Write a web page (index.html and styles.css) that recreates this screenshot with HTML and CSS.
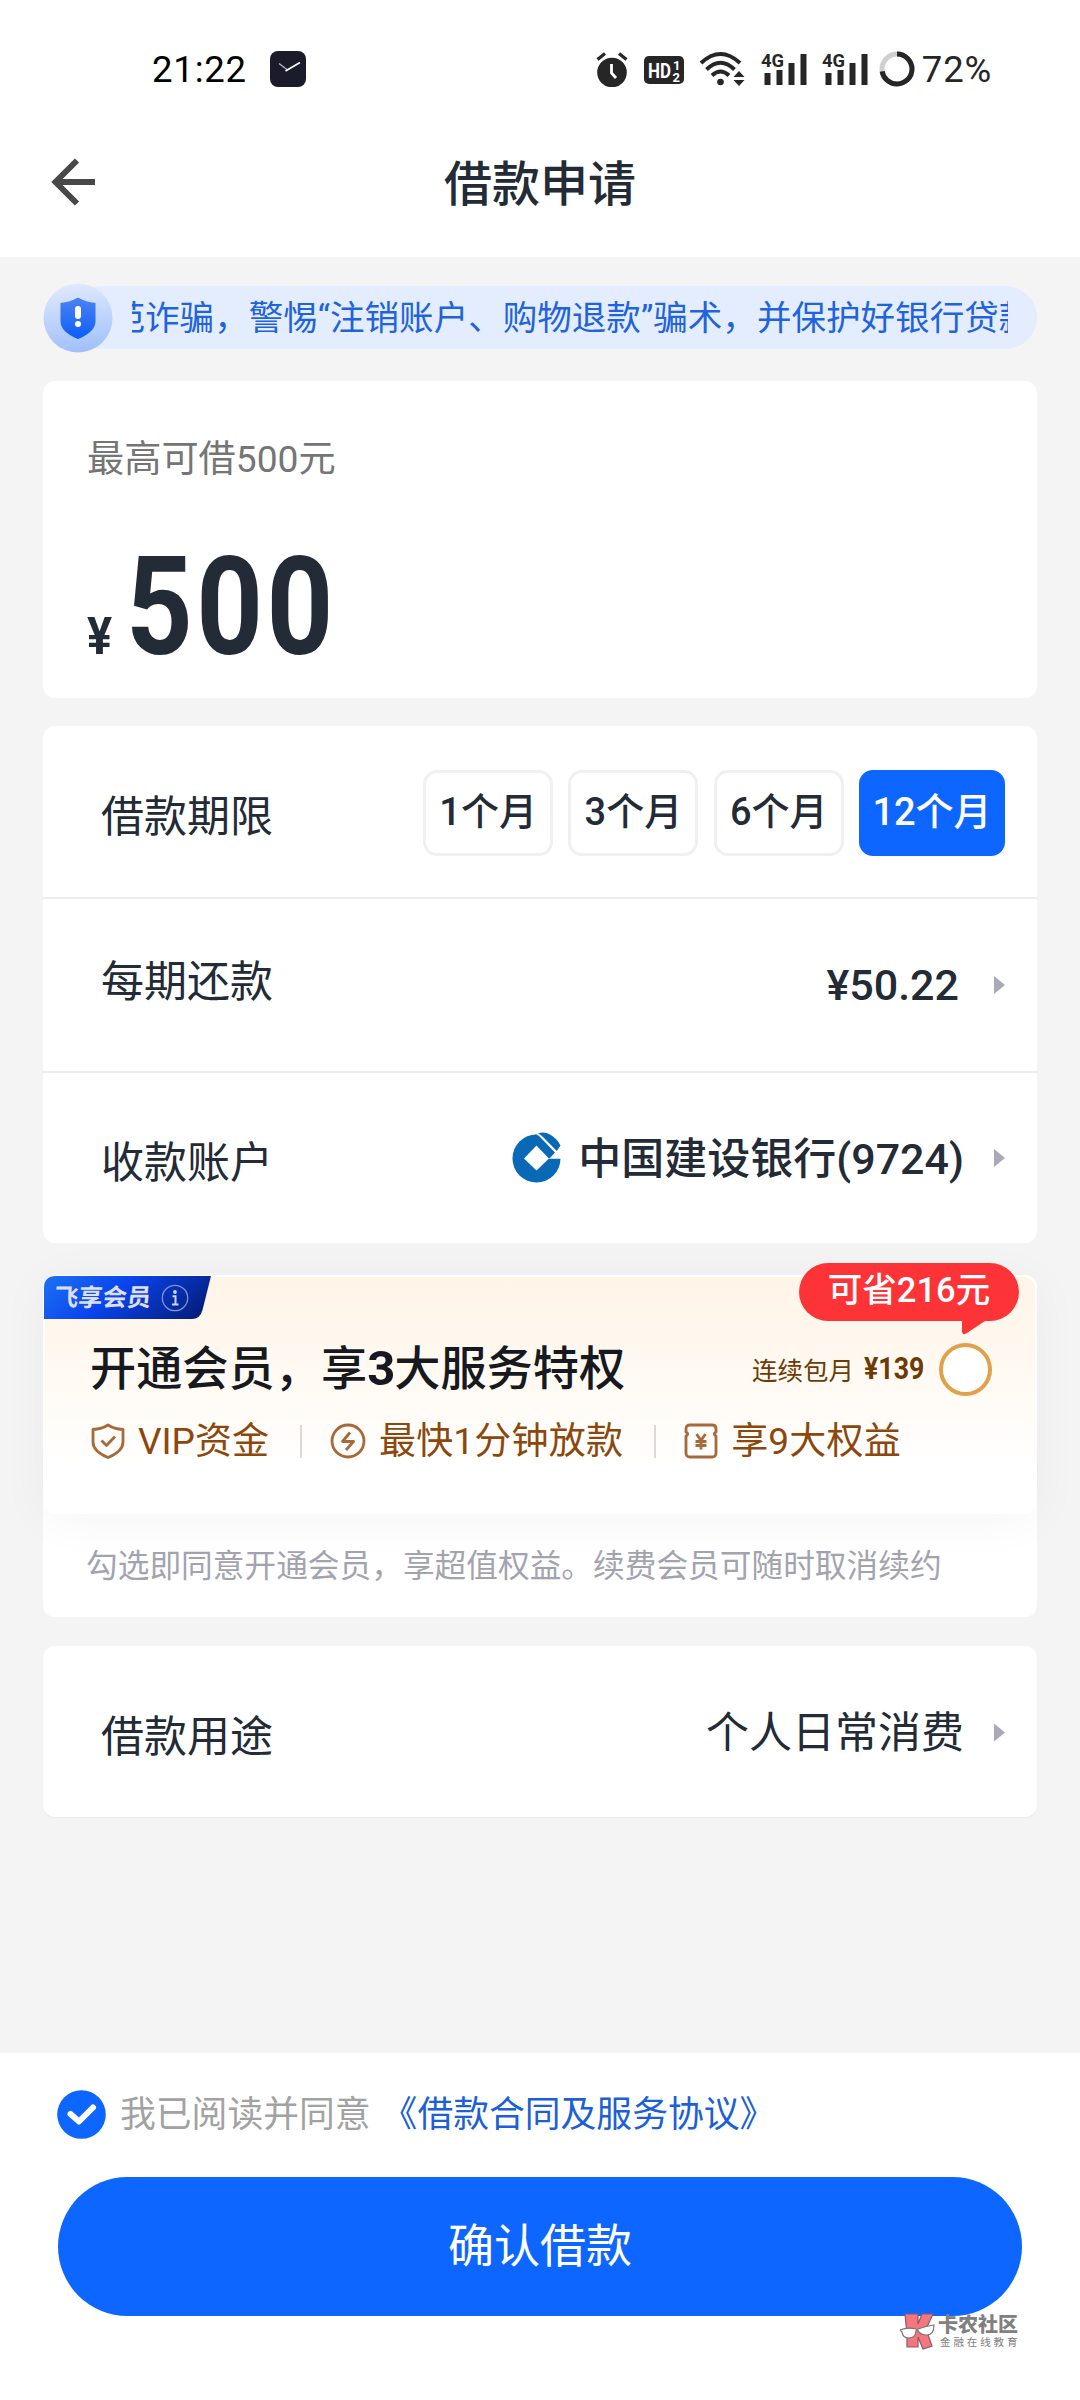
FILE: index.html
```html
<!DOCTYPE html>
<html lang="zh-CN">
<head>
<meta charset="utf-8">
<title>借款申请</title>
<link rel="stylesheet" href="styles.css">
</head>
<body>
<header class="header">
  <div class="status">
    <span class="time">21:22</span>
    <svg class="clock" width="36" height="36" viewBox="0 0 36 36"><rect width="36" height="36" rx="8" fill="#1a1c2b"/><path d="M9 12.500L17.500 19" stroke="#b9bcc8" stroke-width="1.200" fill="none"/><path d="M15.500 20L30 11.500" stroke="#fff" stroke-width="1.500" fill="none"/></svg>
    <div class="status-icons">
      <svg width="32" height="36" viewBox="0 0 32 36"><circle cx="16" cy="21.500" r="14.800" fill="#262626"/><path d="M1.500 8.500L9 2.500M30.500 8.500L23 2.500" stroke="#262626" stroke-width="3.200"/><path d="M15.500 13v9l4.500 5" stroke="#fff" stroke-width="2.800" fill="none"/></svg>
      <svg width="40" height="36" viewBox="0 0 40 36"><rect y="5" width="40" height="28" rx="5" fill="#262626"/><text class="hd" x="4" y="26.500" textLength="23" lengthAdjust="spacingAndGlyphs">HD</text><text class="hd-n" x="29" y="19">1</text><text class="hd-n" x="28.500" y="30.500">2</text></svg>
      <svg width="46" height="36" viewBox="0 0 46 36"><g fill="none" stroke="#262626" stroke-width="4"><path d="M1 12Q20.500-6 40 12"/><path d="M6.500 18.500Q20.500 5 34.500 18.500"/><path d="M12 24.500Q20.500 16.500 29 24.500"/></g><circle cx="20.500" cy="31" r="3.300" fill="#262626"/><path d="M33.500 26h11L39 20zM33.500 29h11L39 35z" fill="#262626"/></svg>
      <svg class="signal" width="46" height="36" viewBox="0 0 46 36"><text class="net" x="0" y="16" textLength="23" lengthAdjust="spacingAndGlyphs">4G</text><path d="M3.500 22h6v12h-6zM15.500 19h6v15h-6zM27.500 12h6v22h-6zM39.500 3h6v31h-6z" fill="#262626"/></svg>
      <svg class="signal" width="46" height="36" viewBox="0 0 46 36"><text class="net" x="0" y="16" textLength="23" lengthAdjust="spacingAndGlyphs">4G</text><path d="M3.500 22h6v12h-6zM15.500 19h6v15h-6zM27.500 12h6v22h-6zM39.500 3h6v31h-6z" fill="#262626"/></svg>
      <svg class="ring" width="36" height="36" viewBox="0 0 36 36"><circle cx="18" cy="18" r="15" fill="none" stroke="#cfcfcf" stroke-width="5"/><circle cx="18" cy="18" r="15" fill="none" stroke="#262626" stroke-width="5" stroke-dasharray="67.900 94.200" transform="rotate(-90 18 18)"/></svg>
      <span class="percent">72%</span>
    </div>
  </div>
  <nav class="nav">
    <svg class="back" width="46" height="48" viewBox="0 0 46 48"><path d="M26 2.500L4.500 24L26 45.500M4 24H44" fill="none" stroke="#484848" stroke-width="6"/></svg>
    <h1 class="title">借款申请</h1>
  </nav>
</header>

<main class="main">
  <div class="notice">
    <svg class="notice-icon" width="70" height="70" viewBox="0 0 70 70">
      <defs>
        <linearGradient id="halo" x1="0.500" y1="0" x2="0.600" y2="1"><stop offset="0" stop-color="#dfe9fe"/><stop offset="1" stop-color="#9fbffa"/></linearGradient>
        <linearGradient id="shield" x1="0" y1="0" x2="0" y2="1"><stop offset="0" stop-color="#4d83f2"/><stop offset="1" stop-color="#0c5dfa"/></linearGradient>
      </defs>
      <circle cx="35" cy="35" r="34.500" fill="url(#halo)"/>
      <path d="M35 14.500Q43 19 52.500 20V38Q52.500 49 35 56Q17.500 49 17.500 38V20Q27 19 35 14.500Z" fill="url(#shield)"/>
      <rect x="32" y="23" width="6" height="13" rx="3" fill="#fff"/><circle cx="35" cy="41" r="3" fill="#fff"/>
    </svg>
    <div class="notice-bar"><div class="marquee"><span class="marquee-text">范诈骗，警惕“注销账户、购物退款”骗术，并保护好银行贷款</span></div></div>
  </div>

  <section class="card amount">
    <p class="limit">最高可借500元</p>
    <p class="sum"><span class="yen">¥</span><span class="figure">500</span></p>
  </section>

  <section class="card">
    <div class="row term">
      <span class="label">借款期限</span>
      <div class="chips">
        <span class="chip">1个月</span><span class="chip">3个月</span><span class="chip">6个月</span><span class="chip chip-on">12个月</span>
      </div>
    </div>
    <div class="row monthly">
      <span class="label">每期还款</span>
      <span class="value strong">¥50.22</span><i class="caret"></i>
    </div>
    <div class="row account">
      <span class="label">收款账户</span>
      <svg class="bank" width="50" height="52" viewBox="0 0 50 52"><circle cx="24.500" cy="26.500" r="24" fill="#0a69b7"/><path d="M24.500 13.500L37 26.500L24.500 38.500L12 26.500Z" fill="#fff"/><path d="M24 2L35 15L51 28V-2H24Z" fill="#fff"/><path d="M37 25L42 20L50 18V26.800H37Z" fill="#fff"/><path d="M23 2.600Q25.500 2.300 28 5L43 20.500L37.500 26.500L22 10Z" fill="#0a69b7"/><path d="M26 1.500Q32-1 38 2.500Q45.500 7 48.500 13.500L44.800 19L31 5Q29 2.500 26 1.500Z" fill="#0a69b7"/></svg>
      <span class="value strong">中国建设银行(9724)</span><i class="caret"></i>
    </div>
  </section>

  <section class="card vip">
    <div class="vip-panel">
      <div class="vip-tag">
        <svg class="tag-shape" width="168" height="43" viewBox="0 0 168 43"><defs><linearGradient id="tag" x1="0" y1="0.300" x2="1" y2="0.600"><stop offset="0" stop-color="#1a6bf2"/><stop offset="0.400" stop-color="#0a45ee"/><stop offset="1" stop-color="#041f80"/></linearGradient></defs><path d="M12 0H167L158.500 34Q156 43 148 43H0V12Q0 0 12 0Z" fill="url(#tag)"/></svg>
        <span class="tag-text">飞享会员</span>
        <svg class="info" width="28" height="28" viewBox="0 0 28 28"><circle cx="14" cy="14" r="12.700" fill="none" stroke="#7f93dc" stroke-width="1.300"/><circle cx="14" cy="8" r="1.900" fill="#cdd5f8"/><path d="M11.500 12.300H14.500V20M11 20.500h6.500" fill="none" stroke="#cdd5f8" stroke-width="2"/></svg>
      </div>
      <div class="badge"><span>可省216元</span><svg class="tail" width="26" height="17" viewBox="0 0 26 17"><path d="M0 0H26L5 14Q0 17 0 12Z" fill="#fd3437"/></svg></div>
      <div class="vip-head">
        <h2 class="vip-title">开通会员，享<b>3</b>大服务特权</h2>
        <span class="plan">连续包月</span><span class="price">¥139</span><span class="radio"></span>
      </div>
      <div class="perks">
        <svg width="34" height="36" viewBox="0 0 34 36"><path d="M17 2Q23 6 32 6.500V19Q32 28.500 17 34.500Q2 28.500 2 19V6.500Q11 6 17 2Z" class="line"/><path d="M10.500 17.500L15.500 22.500L24 13.500" class="line"/></svg>
        <span class="perk">VIP资金</span>
        <i class="sep"></i>
        <svg class="bolt" width="36" height="36" viewBox="0 0 36 36"><circle cx="18" cy="18" r="16" class="line"/><path d="M20 9.500L12.500 18.500H23.500L16 27" class="line"/></svg>
        <span class="perk wide">最快1分钟放款</span>
        <i class="sep"></i>
        <svg width="34" height="36" viewBox="0 0 34 36"><path d="M6 2H28Q32 2 32 6V9Q28.500 11 32 13V30Q32 34 28 34H6Q2 34 2 30V13Q5.500 11 2 9V6Q2 2 6 2Z" class="line"/><path d="M12.500 11L17 17.500L21.500 11M17 17V26.500M11.500 18.500H22.500M11.500 22.500H22.500" class="line"/></svg>
        <span class="perk wide">享9大权益</span>
      </div>
    </div>
    <p class="terms">勾选即同意开通会员，享超值权益。续费会员可随时取消续约</p>
  </section>

  <section class="card">
    <div class="row purpose">
      <span class="label">借款用途</span>
      <span class="value">个人日常消费</span><i class="caret"></i>
    </div>
  </section>
</main>

<footer class="footer">
  <div class="agree">
    <svg class="check" width="49" height="49" viewBox="0 0 49 49"><circle cx="24.500" cy="24.500" r="24.300" fill="#0d66ff"/><path d="M13.500 24L22 31.500L36 17.500" fill="none" stroke="#fff" stroke-width="6" stroke-linecap="round" stroke-linejoin="round"/></svg>
    <span class="agree-text">我已阅读并同意</span><a class="link">《借款合同及服务协议》</a>
  </div>
  <button class="confirm">确认借款</button>
  <div class="mark">
    <svg width="35" height="37" viewBox="0 0 35 37"><path d="M5 1H18V11L22 1H33L26 16L32 33L23 36L18 24V34H7V22Z" fill="#f5767f" stroke="#8b5c62" stroke-width="1.200"/><path d="M0 17Q8 14 16 16Q17 18 18 16Q26 13 34 12Q34 22 27 22Q20 22 18 17.500Q16 17 16 18Q15.500 25 9 25Q2.500 25 2 19Z" fill="#fff" stroke="#777" stroke-width="1.200"/></svg>
    <div class="mark-text"><b>卡农社区</b><small>金融在线教育</small></div>
  </div>
</footer>
</body>
</html>
```
FILE: styles.css
```css
* { box-sizing: border-box; }
body {
  margin: 0;
  width: 1080px;
  height: 2400px;
  display: flex;
  flex-direction: column;
  overflow: hidden;
  background: #fff;
  color: #222b36;
  font-family: Roboto, "Noto Sans CJK SC", sans-serif;
}
h1, h2, p { margin: 0; font-weight: 400; }
svg { flex: none; display: block; }

.header { height: 257px; background: #fff; }
.status { height: 110px; padding: 28px 88px 0 152px; display: flex; align-items: center; color: #000; }
.time { font-size: 36.500px; font-weight: 450; letter-spacing: .8px; width: 118px; }
.status-icons { margin-left: auto; display: flex; align-items: center; gap: 16px; }
.signal { overflow: visible; margin-left: -1px; }
.ring { margin: 0 -9px 0 -5px; }
.percent { font-size: 36.500px; color: #262626; letter-spacing: .8px; padding-top: 1px; }
.hd { font: 700 20px Roboto, sans-serif; fill: #fff; }
.hd-n { font: 700 13px Roboto, sans-serif; fill: #fff; }
.net { font: 700 19px Roboto, sans-serif; fill: #262626; }
.nav { height: 147px; padding: 0 50px; display: grid; grid-template-columns: 46px 1fr 46px; align-items: center; }
.title { font-size: 48px; font-weight: 500; text-align: center; line-height: 60px; padding-top: 2px; }
.back { margin: -3px 0 0 1px; }

.main { height: 1796px; background: #f4f4f4; padding: 26px 43px 0; }
.notice { height: 70px; display: flex; align-items: center; }
.notice-icon { position: relative; z-index: 1; margin-top: -1px; }
.notice-bar { flex: 1; height: 63px; margin: -1px 0 0 -42px; padding: 0 29px 0 61px; background: #e4edfd; border-radius: 32px; display: flex; align-items: center; }
.marquee { overflow: hidden; flex: 1; height: 50px; line-height: 50px; white-space: nowrap; width: 0; }
.marquee-text { margin-left: -21.500px; font-size: 34.550px; color: #1f63dd; }

.card { background: #fff; border-radius: 12px; }
.amount { margin-top: 28px; height: 317px; padding: 53px 44px 0; }
.limit { font-size: 37.200px; line-height: 50px; color: #757575; }
.sum { margin-top: 53px; height: 140px; line-height: 140px; font-weight: 700; display: flex; align-items: baseline; }
.yen { font-size: 52px; width: 39px; transform: scaleX(.9); transform-origin: 0 50%; }
.figure { font-size: 137px; letter-spacing: 4px; transform: scaleX(.85); transform-origin: 0 50%; }

.amount + .card { margin-top: 28px; }
.row { display: flex; align-items: center; padding: 0 32px 0 58px; height: 172px; line-height: 60px; }
.row + .row { border-top: 2px solid #ededed; }
.label { font-size: 43px; margin-right: auto; }
.value { font-size: 43px; margin-right: 30px; }
.strong { font-weight: 500; }
.caret { width: 11px; height: 18px; background: #a9a9b8; clip-path: polygon(0 0, 100% 50%, 0 100%); }
.term .label { padding-top: 10px; }
.chips { display: flex; gap: 15.300px; margin-top: 2px; }
.chip { width: 130px; height: 86px; border: 3px solid #f0f0f0; border-radius: 14px; font-size: 38px; font-weight: 500; line-height: 78px; text-align: center; }
.chip-on { width: 146px; background: #0d66ff; border-color: #0d66ff; color: #fff; }
.row.term { height: 171px; }
.row.monthly { height: 174px; }
.monthly .label { margin-top: -7px; }
.monthly .value { font-size: 43px; margin-right: 35px; }
.account .label { margin-top: 9px; }
.account .value { margin-top: 1px; }
.bank { margin: 0 16px 0 0; }
.row.purpose { height: 171px; }
.purpose .label { margin-top: 10px; }
.purpose .value { margin-top: 3px; }
.purpose .caret { margin-top: 2px; }

.vip { margin-top: 32px; height: 342px; }
.vip-panel { position: relative; height: 239px; border: 2px solid #fff; border-bottom: 0; border-radius: 14px; background: linear-gradient(#fff4e8, #fffaf3 45%, #fff 80%); box-shadow: 0 6px 50px rgba(0, 0, 0, .045); }
.vip-tag { position: absolute; left: -1px; top: -1px; width: 168px; height: 43px; }
.tag-shape { position: absolute; }
.tag-text { position: absolute; left: 10px; top: 0; font-size: 24.300px; font-weight: 700; line-height: 44px; color: #dcdffd; transform: skewX(-6deg); white-space: nowrap; }
.info { position: absolute; left: 117px; top: 8px; }
.badge { position: absolute; left: 754px; top: -14px; width: 220px; height: 58px; border-radius: 29px; background: #fd3437; color: #fff; font-size: 34.500px; font-weight: 500; line-height: 55px; text-align: center; }
.tail { position: absolute; left: 163px; top: 56px; }
.vip-head { display: flex; align-items: center; padding: 0 43px 0 45px; margin-top: 62px; height: 60px; color: #6d3c06; }
.vip-title { font-size: 46.200px; font-weight: 500; line-height: 58px; color: #161a20; margin-right: auto; white-space: nowrap; }
.vip-title b { font-size: 49px; letter-spacing: -1px; }
.plan { font-size: 25.500px; margin: -1px 10px 0 0; }
.price { font-size: 31.500px; font-weight: 700; margin-top: -1px; width: 75px; transform: scaleX(.85); transform-origin: 0 50%; }
.radio { width: 53px; height: 53px; border: 4px solid #dfa14a; border-radius: 50%; background: #fff; }
.perks { display: flex; align-items: center; margin-top: 16px; padding-left: 46px; height: 52px; color: #8c480c; font-size: 37px; line-height: 51px; }
.perks svg { margin-right: 13px; }
.perk { white-space: nowrap; }
.wide { letter-spacing: .2px; }
.sep { width: 2px; height: 33px; background: #dcd8d3; margin: 0 28px 0 31px; }
.line { fill: none; stroke: #a8693a; stroke-width: 2.800; stroke-linejoin: round; }
.terms { font-size: 31.700px; line-height: 50px; color: #a3a3b0; padding: 28px 43px 0; white-space: nowrap; }
.vip + .card { margin-top: 29px; box-shadow: 0 1px 1px #e9e9e9; }

.footer { position: relative; flex: 1; background: #fff; padding: 37px 58px 0; }
.agree { display: flex; align-items: center; height: 49px; font-size: 35.800px; line-height: 50px; margin-left: -1px; }
.agree-text { color: #a2a2a2; margin: 1px 11px 0 14px; }
.link { color: #1c5fd6; margin-top: 1px; }
.confirm { display: block; width: 964px; height: 139px; margin-top: 38px; padding: 0 0 2px; border: 0; border-radius: 70px; background: #0d66ff; color: #fff; font: 400 46px/60px Roboto, "Noto Sans CJK SC", sans-serif; }
.mark { position: absolute; left: 900px; top: 260px; display: flex; gap: 3px; color: #808080; }
.mark-text { display: flex; flex-direction: column; white-space: nowrap; }
.mark-text b { font-size: 20px; line-height: 24px; font-weight: 900; }
.mark-text small { font-size: 10.500px; line-height: 12px; letter-spacing: 2.900px; padding-left: 2px; }
```
